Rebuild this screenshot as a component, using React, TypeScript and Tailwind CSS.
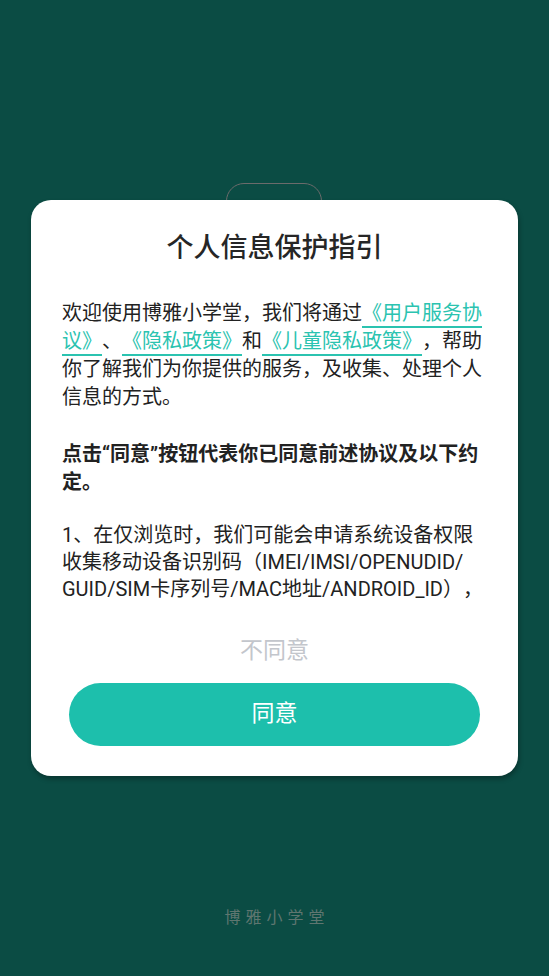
const font = { fontFamily: 'Roboto, "Noto Sans CJK SC", sans-serif' }

function Link({ children }: { children: React.ReactNode }) {
  return <span className="text-[#2bc3b0] underline decoration-[1.5px] underline-offset-[6px]">{children}</span>
}

export default function App() {
  return (
    <div className="relative flex h-[976px] w-[549px] flex-col bg-[#0b4c44] [text-spacing-trim:space-all]" style={font}>
      {/* handle peeking behind the card */}
      <div className="absolute left-[226px] top-[183px] h-[40px] w-[96px] rounded-t-[18px] border-[1.5px] border-[#6b6b6b]" />

      <div className="relative mx-[31px] mt-[200px] w-[487px] rounded-[20px] bg-white pt-[30px] pb-[30px] shadow-[1px_3px_5px_rgba(0,0,0,0.3)]">
        <h1 className="text-center text-[27px] font-medium leading-[36px] text-[#262626]">个人信息保护指引</h1>

        <div className="mt-[33px] h-[305px] overflow-hidden px-[31px] text-[20px] leading-[28px] text-[#222]">
          <p>
            欢迎使用博雅小学堂，我们将通过<Link>《用户服务协议》</Link>、<Link>《隐私政策》</Link>和<Link>《儿童隐私政策》</Link>，帮助你了解我们为你提供的服务，及收集、处理个人信息的方式。
          </p>
          <p className="mt-[29px] font-bold">点击“同意”按钮代表你已同意前述协议及以下约定。</p>
          <p className="mt-[26px] leading-[27px]">
            1、在仅浏览时，我们可能会申请系统设备权限收集移动设备识别码（IMEI/<wbr />IMSI/<wbr />OPENUDID/<wbr />GUID/<wbr />SIM卡序列号/<wbr />MAC地址/<wbr />ANDROID_ID），用于识别设备并保障账号与服务安全。
          </p>
        </div>

        <div className="mt-[31px] text-center text-[23px] leading-[32px] text-[#c3c6cc]">不同意</div>

        <button className="mx-auto mt-[16px] flex h-[63px] w-[411px] items-center justify-center rounded-full bg-[#1dbfac] text-[23px] text-white">
          同意
        </button>
      </div>

      <div className="mt-auto pb-[47px] pl-[5px] text-center text-[16px] leading-[22px] tracking-[5px] text-[#5f7670]">博雅小学堂</div>
    </div>
  )
}
